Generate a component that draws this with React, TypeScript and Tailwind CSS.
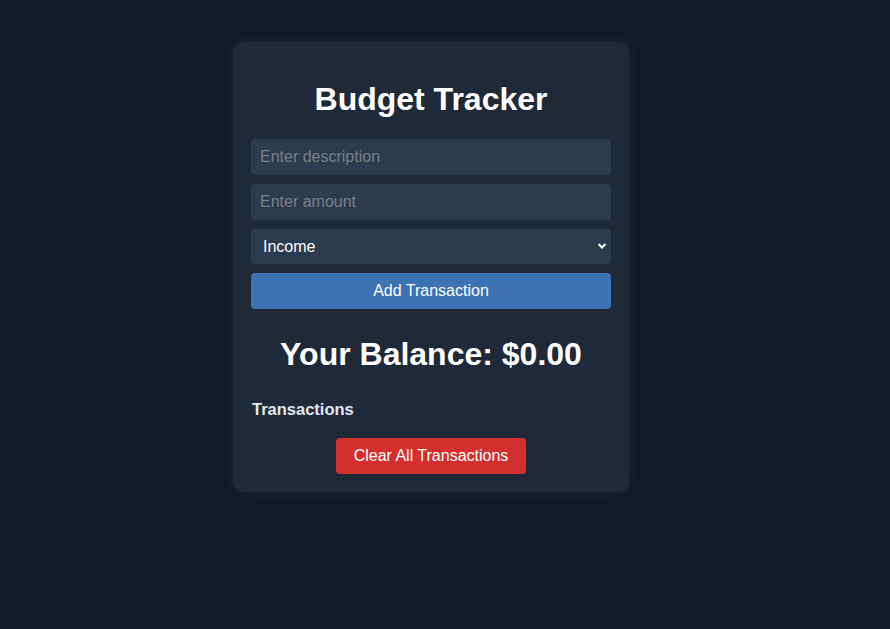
import React from "react";

export default function App() {
  const font = { fontFamily: '"Liberation Sans", Arial, sans-serif' };
  return (
    <div className="min-h-[629px] w-full bg-[#131a28] pl-[233px] pt-[42px]" style={font}>
      <div className="w-[396px] rounded-[10px] bg-[#1f2937] px-[18px] pb-[18px] pt-[39px] shadow-[0_0_12px_rgba(31,41,55,0.9)]">
        <h1 className="text-center text-[32px] font-bold leading-[37px] text-white">Budget Tracker</h1>
        <div className="mt-[21px] flex flex-col gap-[9px]">
          <input
            className="h-[36px] w-full rounded-[4px] bg-[#2c3b4d] px-[9px] text-[16px] text-white placeholder:text-[#7a7f86] outline-none"
            placeholder="Enter description"
          />
          <input
            className="h-[36px] w-full rounded-[4px] bg-[#2c3b4d] px-[9px] text-[16px] text-white placeholder:text-[#7a7f86] outline-none"
            placeholder="Enter amount"
          />
          <div className="relative">
            <select className="h-[35px] w-full appearance-none rounded-[4px] bg-[#2c3b4d] px-[12px] text-[16px] text-white outline-none">
              <option>Income</option>
              <option>Expense</option>
            </select>
            <svg
              className="pointer-events-none absolute right-[4px] top-[13px]"
              width="10"
              height="8"
              viewBox="0 0 10 8"
            >
              <path d="M1.5 2 L5 5.5 L8.5 2" stroke="#ffffff" strokeWidth="2" fill="none" />
            </svg>
          </div>
          <button className="h-[36px] w-full rounded-[4px] bg-[#3d72b3] text-[16px] text-white">
            Add Transaction
          </button>
        </div>
        <h2 className="mt-[27px] text-center text-[32px] font-bold leading-[37px] text-white">
          Your Balance: $0.00
        </h2>
        <h3 className="mt-[27px] pl-[1px] text-[16.5px] font-bold leading-[19px] text-[#e3e6ea]">Transactions</h3>
        <div className="mt-[19px] flex justify-center">
          <button className="h-[36px] w-[190px] rounded-[4px] bg-[#d32f2f] text-[16px] text-white">
            Clear All Transactions
          </button>
        </div>
      </div>
    </div>
  );
}
